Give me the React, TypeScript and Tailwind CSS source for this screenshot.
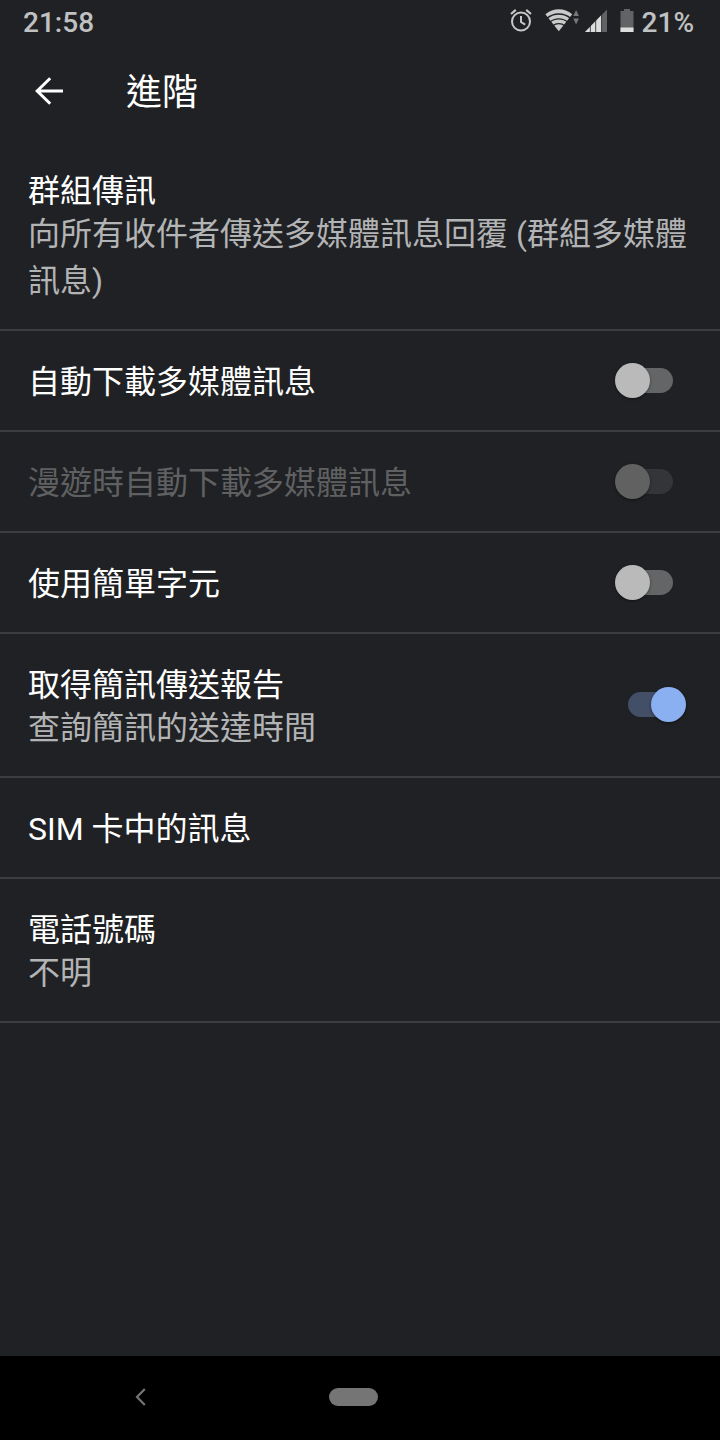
import { useState } from "react";
import clsx from "clsx";

type Item = {
  title: string;
  description?: string;
  checked?: boolean;
  disabled?: boolean;
};

const items: Item[] = [
  {
    title: "群組傳訊",
    description: "向所有收件者傳送多媒體訊息回覆 (群組多媒體訊息)",
  },
  { title: "自動下載多媒體訊息", checked: false },
  { title: "漫遊時自動下載多媒體訊息", checked: false, disabled: true },
  { title: "使用簡單字元", checked: false },
  { title: "取得簡訊傳送報告", description: "查詢簡訊的送達時間", checked: true },
  { title: "SIM 卡中的訊息" },
  { title: "電話號碼", description: "不明" },
];

const AlarmIcon = () => (
  <svg width="24" height="24" viewBox="509 9 24 24" fill="none" stroke="#c7c8c8" strokeWidth="2">
    <circle cx="521" cy="21.5" r="9" />
    <path d="M521 16v6l4.2 2.6" />
    <path d="M511 14l4.8-4.1M531 14l-4.8-4.1" strokeWidth="2.2" />
  </svg>
);

const WifiIcon = () => (
  <svg width="36" height="24" viewBox="545 9 36 24">
    <path d="M558.8 31.3L545.4 14.2C549.4 10.9 554 9.2 558.8 9.2s9.4 1.7 13.4 5z" fill="#c9caca" />
    <path
      d="M546.8 18.4a18.6 18.6 0 0 1 24 0M549.6 22.3a14 14 0 0 1 18.4 0M552.6 26a9.4 9.4 0 0 1 12.4 0"
      fill="none"
      stroke="#202124"
      strokeWidth="1.3"
    />
    <path d="M573.3 16l2.8-6 2.8 6zM573.3 18.6h5.6l-2.8 6z" fill="#77787a" />
  </svg>
);

const SignalIcon = () => (
  <svg width="24" height="24" viewBox="584 9 24 24">
    <path d="M585 32l22-22.5V32z" fill="#626365" />
    <path d="M585 32l16.5-16.9V32z" fill="#dcdddd" />
    <path d="M590.3 25v7M595.7 19v13M601.6 14v18" stroke="#202124" strokeWidth="0.8" />
  </svg>
);

const BatteryIcon = () => (
  <svg width="14" height="24" viewBox="620 9 14 24">
    <path d="M624 9h6v2h3.5v21h-13V11h3.5z" fill="#626365" />
    <path d="M620.5 27.5h13V32h-13z" fill="#dcdddd" />
  </svg>
);

const StatusBar = () => (
  <div className="flex h-11 items-center justify-between pr-[26px] pb-0.5 pl-[23px] text-[28px] leading-none font-medium text-[#c0c1c2]">
    <span className="pt-1">21:58</span>
    <div className="flex items-center">
      <AlarmIcon />
      <div className="ml-3 flex">
        <WifiIcon />
      </div>
      <div className="ml-[3px] flex">
        <SignalIcon />
      </div>
      <div className="ml-3 flex">
        <BatteryIcon />
      </div>
      <span className="ml-2 pt-1">21%</span>
    </div>
  </div>
);

const Header = () => (
  <header className="flex h-24 items-center border-b border-[#1e1f22] pb-0.5 pl-[35px]">
    <svg width="28" height="28" viewBox="0 0 28 28" fill="none" stroke="#fff" strokeWidth="3">
      <path d="M28 14H2.5M15.2 1.3L2.2 14l13 12.7" />
    </svg>
    <h1 className="ml-[63px] pt-1 text-4xl leading-[52px] text-white">進階</h1>
  </header>
);

type SwitchProps = {
  checked: boolean;
  disabled?: boolean;
  onChange: () => void;
};

const Switch = ({ checked, disabled, onChange }: SwitchProps) => (
  <button
    type="button"
    role="switch"
    aria-checked={checked}
    disabled={disabled}
    onClick={onChange}
    className={clsx(
      "mb-px flex h-[25px] w-[55px] shrink-0 items-center rounded-full",
      checked ? "mr-[37px] justify-end bg-[#434f66]" : "mr-[47px]",
      !checked && (disabled ? "bg-[#343538]" : "bg-[#646567]")
    )}
  >
    <span
      className={clsx(
        "size-[35px] shrink-0 rounded-full shadow-[0_1px_3px_rgba(0,0,0,0.45)]",
        checked ? "-mr-[3px] bg-[#8ab0f2]" : "-ml-[3px]",
        !checked && (disabled ? "bg-[#616161]" : "bg-[#bababa]")
      )}
    />
  </button>
);

const SettingRow = ({ item }: { item: Item }) => {
  const [checked, setChecked] = useState(!!item.checked);

  return (
    <div className="flex items-center justify-between border-b-2 border-[#3c3d41] pl-7">
      <div className="w-[664px] pt-[30px] pb-[26px]">
        <h2
          className={clsx(
            "text-[32px] leading-[43px]",
            item.disabled ? "text-[#5f6062]" : "text-white"
          )}
        >
          {item.title}
        </h2>
        {item.description && (
          <p className="-my-0.5 text-[32px] leading-[47px] text-[#b3b4b5]">
            {item.description}
          </p>
        )}
      </div>
      {item.checked !== undefined && (
        <Switch
          checked={checked}
          disabled={item.disabled}
          onChange={() => setChecked(!checked)}
        />
      )}
    </div>
  );
};

const NavigationBar = () => (
  <nav className="flex h-[84px] items-center bg-black pb-0.5 pl-[135px]">
    <svg width="11" height="18" viewBox="0 0 11 18" fill="none" stroke="#757575" strokeWidth="2.2">
      <path d="M9.8 1L2 9l7.8 8" />
    </svg>
    <div className="ml-[183px] h-[18px] w-[49px] rounded-full bg-[#757575]" />
  </nav>
);

const App = () => {
  return (
    <div className="flex h-[1440px] w-[720px] flex-col overflow-hidden bg-[#202124] font-[Roboto,'Noto_Sans_CJK_TC',sans-serif]">
      <StatusBar />
      <Header />

      {/* Settings list */}
      <main className="flex-1">
        {items.map((item) => (
          <SettingRow key={item.title} item={item} />
        ))}
      </main>

      <NavigationBar />
    </div>
  );
};

export default App;
